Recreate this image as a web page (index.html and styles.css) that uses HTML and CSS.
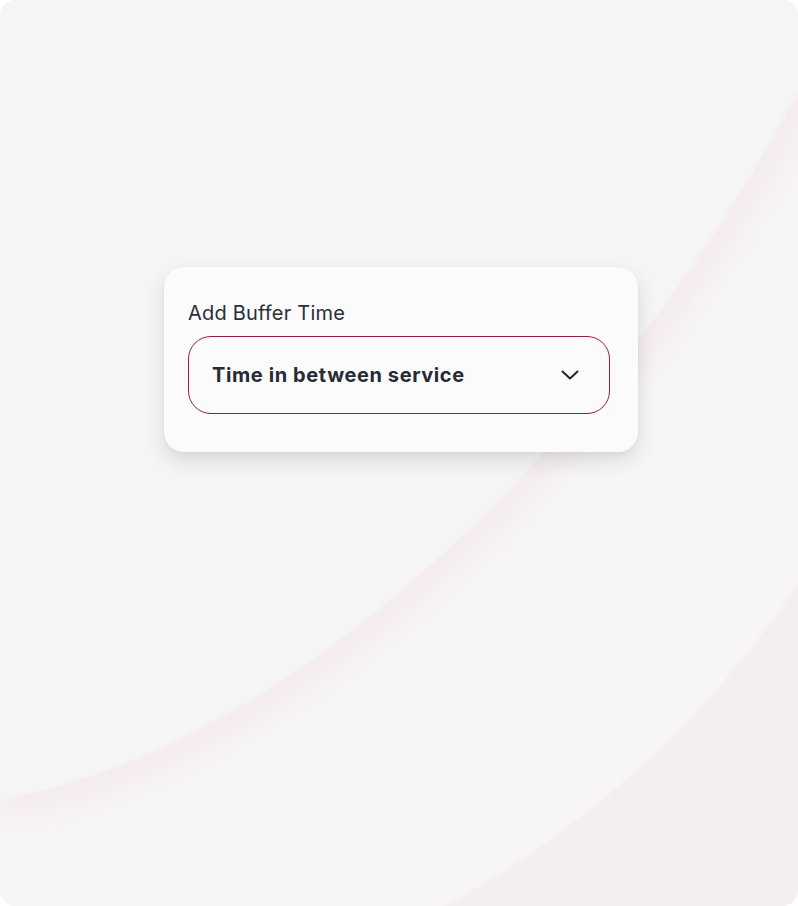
FILE: index.html
```html
<!DOCTYPE html>
<html lang="en">
<head>
<meta charset="utf-8">
<title>Add Buffer Time</title>
<link rel="stylesheet" href="styles.css">
</head>
<body>
<div class="frame">
  <svg class="backdrop" width="798" height="906" viewBox="0 0 798 906" aria-hidden="true">
    <defs>
      <filter id="soft" x="-20%" y="-20%" width="140%" height="140%">
        <feGaussianBlur stdDeviation="14"/>
      </filter>
      <filter id="edge" x="-5%" y="-5%" width="110%" height="110%">
        <feGaussianBlur stdDeviation="1"/>
      </filter>
    </defs>
    <rect width="798" height="906" fill="#f5eef0"/>
    <circle cx="-30" cy="30" r="996" fill="#f7f5f5" filter="url(#edge)"/>
    <path d="M 798 90 C 650 380, 330 740, 0 800" fill="none" stroke="#f4ebed" stroke-width="44" filter="url(#soft)"/>
    <path d="M 798 90 C 650 380, 330 740, 0 800 L -40 800 L -40 -40 L 840 -40 L 840 90 Z" fill="#f5f5f5" filter="url(#edge)"/>
  </svg>
  <div class="content">
    <div class="card">
      <div class="label">Add Buffer Time</div>
      <div class="select">
        <span class="select-value">Time in between service</span>
        <svg class="chevron" width="18" height="10" viewBox="0 0 18 10" aria-hidden="true">
          <path d="M1.5 1.5 L9 8.5 L16.5 1.5" fill="none" stroke="#1f2633" stroke-width="2" stroke-linecap="round" stroke-linejoin="round"/>
        </svg>
      </div>
    </div>
  </div>
</div>
</body>
</html>
```
FILE: styles.css
```css
html, body {
  margin: 0;
  padding: 0;
  background: #ffffff;
}

.frame {
  position: relative;
  width: 798px;
  height: 906px;
  border-radius: 16px;
  overflow: hidden;
  background: #f5f5f5;
  font-family: Inter, "Open Sans", "Liberation Sans", sans-serif;
}

.backdrop {
  position: absolute;
  left: 0;
  top: 0;
  z-index: 0;
}

.content {
  position: relative;
  z-index: 1;
  padding-top: 267px;
  padding-left: 164px;
}

.card {
  width: 474px;
  height: 185px;
  box-sizing: border-box;
  padding: 34px 28px 0 24px;
  background: #fbfbfb;
  border-radius: 20px;
  box-shadow: 0 9px 20px rgba(40, 40, 50, 0.13), 0 2px 4px rgba(40, 40, 50, 0.04);
  display: flex;
  flex-direction: column;
  gap: 11px;
}

.label {
  font-size: 20px;
  line-height: 24px;
  font-weight: 400;
  color: #2a2f3a;
  letter-spacing: 0.2px;
}

.select {
  height: 78px;
  flex: 0 0 78px;
  box-sizing: border-box;
  border: 1.8px solid #961c45;
  border-radius: 23px;
  display: flex;
  align-items: center;
  justify-content: space-between;
  padding: 0 30px 0 23px;
}

.select-value {
  font-size: 20px;
  line-height: 24px;
  font-weight: 700;
  color: #262b35;
  letter-spacing: 0.6px;
}

.chevron {
  display: block;
}
```
